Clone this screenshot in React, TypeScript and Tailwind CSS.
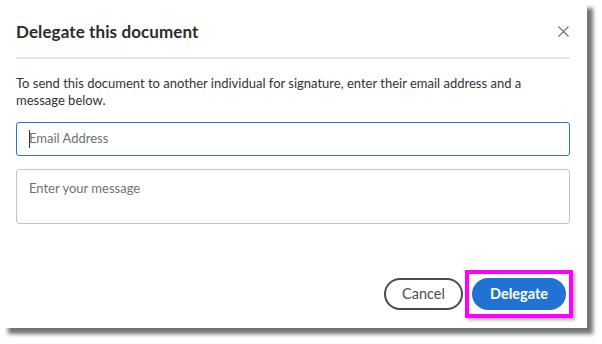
import React from "react";

export default function App() {
  return (
    <div className="w-[602px] h-[344px] bg-white relative" style={{ fontFamily: 'Lato, "Noto Sans", sans-serif' }}>
      <div className="w-[587px] h-[328px] bg-white flex flex-col shadow-[7px_7px_4px_-1px_rgba(0,0,0,0.55)]">
        <div className="h-[57px] flex items-center justify-between pl-4 pr-[18px] pt-[6px]">
          <h1 className="text-[17px] font-bold text-[#2c2c2c] tracking-[0.1px]">Delegate this document</h1>
          <svg width="11" height="11" viewBox="0 0 11 11" className="text-[#6e6e6e]">
            <path d="M0.5 0.5 L10.5 10.5 M10.5 0.5 L0.5 10.5" stroke="currentColor" strokeWidth="1.1" fill="none" />
          </svg>
        </div>
        <div className="mx-4 mr-[17px] h-[2px] bg-[#e6e6e6]" />
        <p className="mx-4 mt-[16px] text-[13px] leading-[17px] text-[#333333]">
          To send this document to another individual for signature, enter their email address and a message below.
        </p>
        <div className="mx-4 mr-[17px] mt-[13px] h-[34px] border-[1.5px] border-[#2a74d0] rounded-[3px] flex items-center pl-3">
          <span className="w-px h-[18px] bg-[#333] mr-[-1px]" />
          <span className="text-[13px] text-[#707070]">Email Address</span>
        </div>
        <div className="mx-4 mr-[17px] mt-[13px] h-[55px] border border-[#c4c4c4] rounded-[3px] pl-3 pt-[5px]">
          <span className="text-[13px] text-[#707070]">Enter your message</span>
        </div>
        <div className="flex justify-end items-center mt-[54px] mr-[21px] gap-[9px]">
          <button className="w-[79px] h-[32px] rounded-full border-2 border-[#4b4b4b] text-[14.5px] text-[#4b4b4b]">Cancel</button>
          <div className="relative">
            <div className="absolute -left-[7px] -right-[7px] -top-[8px] -bottom-[8px] border-4 border-[#ff00ff] shadow-[2px_2px_3px_rgba(0,0,0,0.35)]" />
            <button className="relative w-[94px] h-[32px] rounded-full bg-[#2173d3] text-white text-[14.5px] font-bold">Delegate</button>
          </div>
        </div>
      </div>
    </div>
  );
}
